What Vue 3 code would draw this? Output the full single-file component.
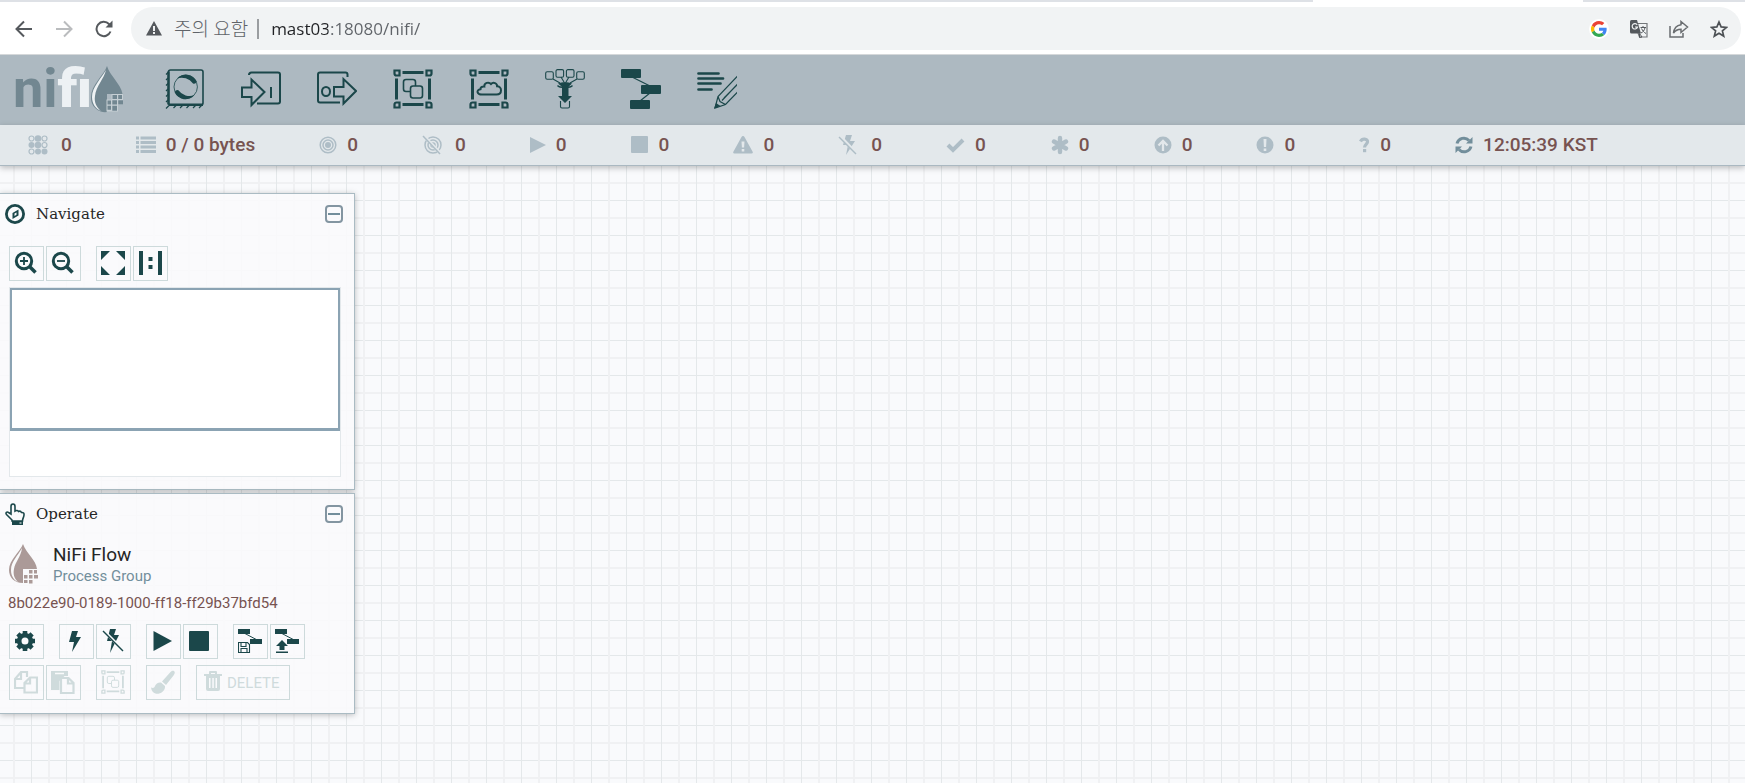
<script setup>
import { ref } from 'vue'

const address = ref('mast03:18080/nifi/')

const groupFrame = `
  <path d="M1.500 1.500h5v5h-3a2 2 0 0 1-2-2zM33.500 1.500h5v3a2 2 0 0 1-2 2h-3zM1.500 38.500v-3a2 2 0 0 1 2-2h3v5zM33.500 33.500h3a2 2 0 0 1 2 2v3h-5z" fill="none" stroke="currentColor" stroke-width="2.200"/>
  <path d="M9.500 3.500h21M9.500 35.500h21M3.500 9.500v21M36.500 9.500v21" fill="none" stroke="currentColor" stroke-width="3"/>`

const groupIcon = `${groupFrame}
  <g fill="none" stroke="currentColor" stroke-width="1.600">
    <path d="M18 22.500h-5a2.500 2.500 0 0 1-2.500-2.500v-7a2.500 2.500 0 0 1 2.500-2.500h7a2.500 2.500 0 0 1 2.500 2.500v4"/>
    <rect x="17.500" y="17" width="12" height="12" rx="2.500"/>
  </g>`

const tools = [
  {
    label: 'Processor',
    art: `
      <rect x="3.500" y="1" width="34.500" height="35" rx="2" fill="none" stroke="currentColor" stroke-width="1.600"/>
      <path d="M3.500 2.500v33M4 35.700h34" stroke="currentColor" stroke-width="2.400"/>
      <path d="M3 3.500L1 5.500M3 9L1 11M3 14.500L1 16.500M3 20L1 22M3 25.500L1 27.500M3 31L1 33M4 36.500L1 39.500M11 36.500L8.500 39M17.500 36.500L15 39M24 36.500L21.500 39M30.500 36.500L28 39M36.500 36.500L34 39" stroke="currentColor" stroke-width="1.200"/>
      <circle cx="20.700" cy="17.900" r="11.700" fill="none" stroke="currentColor" stroke-width=".8"/>
      <path d="M12 9.500A12 12 0 0 1 31.800 12.500Q30.500 15.500 28 14.500A14 14 0 0 0 12 9.500zM29.400 26.300A12 12 0 0 1 9.600 23.300Q10.900 20.300 13.400 21.300A14 14 0 0 0 29.400 26.300z" fill="currentColor"/>`
  },
  {
    label: 'Input Port',
    art: `<g fill="none" stroke="currentColor" stroke-width="2">
      <path d="M8 6q0-2.500 2.500-2.500H37q2 0 2 2V32.500q0 2-2 2H16"/>
      <path d="M1 18.500h9.500V10.500L23.500 23 10.500 36V28H1z"/>
      <path d="M30 18v11"/></g>`
  },
  {
    label: 'Output Port',
    art: `<g fill="none" stroke="currentColor" stroke-width="2">
      <path d="M30.500 8V5.500q0-2-2-2H3q-2 0-2 2V31.500q0 2 2 2H23"/>
      <path d="M17 18h9.500V10L39 22 26.500 34.500V27.500H17z"/>
      <ellipse cx="9" cy="22.500" rx="4" ry="4.600"/></g>`
  },
  { label: 'Process Group', art: groupIcon },
  {
    label: 'Remote Process Group',
    art: `${groupFrame}
      <path d="M13 25.500h14.500c3 0 4.500-2 4.500-4.200s-1.700-4-3.900-4c.2-3-3.800-4.700-6.100-2.300-2.200-2.500-7-1.200-6.700 2.500-2.500-.3-3.900 1-3.800 2.700-4.700.8-3.600 5.300 1.500 5.300z" fill="none" stroke="currentColor" stroke-width="2"/>`
  },
  {
    label: 'Funnel',
    art: `<g fill="none" stroke="currentColor" stroke-width="1.100">
      <rect x=".7" y="2.700" width="7.600" height="7.600" rx="1.500"/><rect x="11" y=".6" width="7.600" height="7.600" rx="1.500"/>
      <rect x="21.400" y=".6" width="7.600" height="7.600" rx="1.500"/><rect x="31.700" y="2.700" width="7.600" height="7.600" rx="1.500"/>
      <path d="M8 10l7 4M16 8l3 5M24 8l-3 5M32 10l-7 4"/>
      <path d="M12.500 16.500c2 2.600 13 2.600 15 0" stroke-width="1.300"/>
      <path d="M15.500 32v5.500q0 1.500 1.500 1.500h6q1.500 0 1.500-1.500V32"/></g>
      <path d="M13 14.500q7-3 14 0l-3.500 3.200v9.300h3.500L20 34l-7-7h4v-9.300z" fill="currentColor"/>`
  },
  {
    label: 'Template',
    art: `<path d="M11 8l18 9M29 24l-10 8" stroke="currentColor" stroke-width="1.200"/>
      <g fill="currentColor"><rect x="0" y="0" width="20" height="9" rx="1"/><rect x="20" y="16" width="20" height="9" rx="1"/><rect x="9" y="31" width="20" height="9" rx="1"/></g>`
  },
  {
    label: 'Label',
    art: `<path d="M1.500 4.500h20M1.500 9.500h24.500M1.500 14.500h22M1.500 20.500h13" stroke="currentColor" stroke-width="2.700" stroke-linecap="round"/>
      <g fill="none" stroke="currentColor" stroke-width="1.200"><path d="M40.500 7L21 27.500 18 39l10.500-3.500L40.500 23M40.500 15L25 31.500M21 27.500l2 5 5.500 3M27 29l13-13"/></g>
      <path d="M19 34l4.500 3L17 39.500z" fill="currentColor"/>`
  }
]

const bolt = 'M8 0h6l-2 6h5L8 20l2-10H5z'

const statuses = [
  { label: 'Active threads', value: '0', w: 20, wide: true, art: `<g fill="currentColor"><circle cx="10" cy="3.500" r="3.300"/><circle cx="3.500" cy="10" r="3"/><circle cx="10" cy="10" r="3.300"/><circle cx="10" cy="16.500" r="3"/><circle cx="16.500" cy="16.500" r="3"/></g><g fill="none" stroke="currentColor" stroke-width="1.200"><circle cx="3.500" cy="3.500" r="2.500"/><circle cx="16.500" cy="3.500" r="2.500"/><circle cx="16.500" cy="10" r="2.500"/><circle cx="3.500" cy="16.500" r="2.500"/></g>` },
  { label: 'Total queued data', value: '0 / 0 bytes', w: 20, art: `<path d="M0 3h3M0 7.500h3M0 12h3M0 16.500h3M4.500 3H20M4.500 7.500H20M4.500 12H20M4.500 16.500H20" stroke="currentColor" stroke-width="3"/>` },
  { label: 'Transmitting', value: '0', w: 18, art: `<g fill="none" stroke="currentColor" stroke-width="1.500"><circle cx="9" cy="10" r="7.800"/><circle cx="9" cy="10" r="5"/></g><circle cx="9" cy="10" r="3" fill="currentColor"/>` },
  { label: 'Not transmitting', value: '0', w: 20, wide: true, art: `<g fill="none" stroke="currentColor" stroke-width="1.500"><circle cx="11" cy="10" r="8"/><circle cx="11" cy="10" r="5"/><circle cx="11" cy="10" r="2"/></g><path d="M2 1l17 18" stroke="#e3e8eb" stroke-width="3"/><path d="M1 1l17 18" stroke="currentColor" stroke-width="1.500"/>` },
  { label: 'Running', value: '0', w: 16, art: `<path d="M0 2l16 8-16 8z" fill="currentColor"/>` },
  { label: 'Stopped', value: '0', w: 18, art: `<rect x="0" y="1" width="17" height="17" rx="1" fill="currentColor"/>` },
  { label: 'Invalid', value: '0', w: 20, art: `<path fill-rule="evenodd" d="M10 1q1 0 1.500 1l8 14.500q1 2-1 2h-17q-2 0-1-2L8.500 2Q9 1 10 1zM8.500 6.500l.4 6h2.200l.4-6zM8.700 14h2.600v2.500H8.700z" fill="currentColor"/>` },
  { label: 'Disabled', value: '0', w: 20, wide: true, art: `<path d="${bolt}" fill="currentColor"/><path d="M2 1l17 18" stroke="#e3e8eb" stroke-width="3"/><path d="M1 2l17 17" stroke="currentColor" stroke-width="1.400"/>` },
  { label: 'Up to date', value: '0', w: 19, art: `<path d="M2 10l5 5L17 5" fill="none" stroke="currentColor" stroke-width="4"/>` },
  { label: 'Locally modified', value: '0', w: 19, art: `<path d="M10 3v14M4 6.500l12 7M16 6.500l-12 7" stroke="currentColor" stroke-width="4.400" stroke-linecap="round"/>` },
  { label: 'Stale', value: '0', w: 18, art: `<circle cx="9" cy="10" r="8.500" fill="currentColor"/><path d="M9 16V6M4.500 10.500L9 6l4.500 4.500" fill="none" stroke="#e3e8eb" stroke-width="2.300"/>` },
  { label: 'Locally modified and stale', value: '0', w: 18, art: `<circle cx="9" cy="10" r="8.500" fill="currentColor"/><path d="M7.500 4h3l-.4 8H7.900zM7.700 13.500h2.600V16H7.700z" fill="#e3e8eb"/>` },
  { label: 'Sync failure', value: '0', w: 11, art: `<path d="M1.500 6.500C3 3 9 3.500 8.500 7c-.3 2.300-3 2.500-3 5.500" fill="none" stroke="currentColor" stroke-width="3.200"/><path d="M4 14h3.200v3.200H4z" fill="currentColor"/>` },
  { label: 'Last refresh', value: '12:05:39 KST', w: 18, dark: true, art: `<path d="M2 8.500A7 7 0 0 1 14 5.500M16 11.500A7 7 0 0 1 4 14.500" fill="none" stroke="currentColor" stroke-width="3"/><path d="M17.500 2v6.500H11zM.5 18v-6.500H7z" fill="currentColor"/>` }
]

const flowMark = `<path d="M6 4l17 9" stroke="currentColor"/><g fill="currentColor"><rect x="0" y="0" width="12" height="5"/><rect x="12" y="10" width="12" height="5"/></g>`

const zoomGroups = [
  [
    { label: 'Zoom In', art: `<circle cx="10" cy="10" r="7.700" fill="none" stroke="currentColor" stroke-width="3"/><path d="M15.500 15.500l6 6" stroke="currentColor" stroke-width="3.600"/><path d="M6 10h8M10 6v8" stroke="currentColor" stroke-width="1.800"/>` },
    { label: 'Zoom Out', art: `<circle cx="10" cy="10" r="7.700" fill="none" stroke="currentColor" stroke-width="3"/><path d="M15.500 15.500l6 6" stroke="currentColor" stroke-width="3.600"/><path d="M6 10h8" stroke="currentColor" stroke-width="1.800"/>` }
  ],
  [
    { label: 'Fit', art: `<path d="M0 0h9L0 9zM24 0v9l-9-9zM0 24v-9l9 9zM24 24h-9l9-9z" fill="currentColor"/>` },
    { label: 'Actual', art: `<path d="M1 0h4v24H1zM20 0h4v24h-4zM10.500 6h4v4h-4zM10.500 14h4v4h-4z" fill="currentColor"/>` }
  ]
]

const operateGroups = [
  [{ label: 'Configuration', art: `<g fill="none" stroke="currentColor"><circle cx="11" cy="12" r="5.800" stroke-width="4.600"/><path d="M11 2v4M11 18v4M1 12h4M17 12h4M3.900 4.900l3 3M15.100 16.100l3 3M18.100 4.900l-3 3M6.900 16.100l-3 3" stroke-width="4.600"/></g>` }],
  [
    { label: 'Enable', art: `<path d="M8 2h6l-2 6h5L8 23l2-10H5z" fill="currentColor"/>` },
    { label: 'Disable', art: `<path d="M9 0h6l-2 6h5L9 24l2-12H6z" fill="currentColor"/><path d="M3 2l20 20" stroke="#f9fafb" stroke-width="3"/><path d="M2 2l20 20" stroke="currentColor" stroke-width="1.400"/>` }
  ],
  [
    { label: 'Start', art: `<path d="M2.500 2l18.500 10-18.500 10z" fill="currentColor"/>` },
    { label: 'Stop', art: `<rect x="1" y="2" width="20" height="20" rx="1" fill="currentColor"/>` }
  ],
  [
    { label: 'Create Template', art: `${flowMark}<path d="M.5 13.500h9l2 2v8H.5zM3 13.500v4h5v-4M3 23.500v-4h6v4" fill="none" stroke="currentColor" stroke-width="1.100"/>` },
    { label: 'Upload Template', art: `${flowMark}<path d="M7 11l6 6H9.500v4h-5v-4H1zM1 22.500h12V24H1z" fill="currentColor"/>` }
  ]
]

const disabledGroups = [
  [
    { label: 'Copy', art: `<g fill="none" stroke="currentColor" stroke-width="2.200"><path d="M10 18H1V9l6-7h6v5M1 9h6V2"/><path d="M10.500 22.500V13l5.500-5.500h7v15zM10.500 13.500H16v-6"/></g>` },
    { label: 'Paste', art: `<path d="M0 1h17v5h-3.500L8.500 11v9H0z" fill="currentColor"/><path d="M4 3.500h9" stroke="#f9fafb" stroke-width="1.500"/><path d="M10 8h7.500l5 5v10H10zM17 8v5.500h5.500" fill="none" stroke="currentColor" stroke-width="2.200"/>` }
  ],
  [{ label: 'Group', art: `<g transform="scale(.6)">${groupIcon}</g>` }],
  [{ label: 'Color', art: `<path d="M23 1c1.500 1 .5 3-.5 4.500L15 15l-4-3.500 8.500-9.500c1.300-1.200 2.600-1.800 3.500-1zM10 12.500l4 3.500c.5 5-5 8.500-9.500 7.500C2 23 .5 20.500 0 17.500c2 1 3.500.5 4-1.500.7-2.200 3.500-4 6-3.500z" fill="currentColor"/>` }]
]
</script>

<template>
  <div class="page">
    <header class="browser">
      <div class="tabs"><span class="tab"></span></div>
      <div class="browser-row">
        <button class="nav-btn" aria-label="Back"><svg width="18" height="18" viewBox="0 0 18 18"><path d="M17 9H2M9 1.500L1.500 9 9 16.500" fill="none" stroke="#55595d" stroke-width="2"/></svg></button>
        <button class="nav-btn" aria-label="Forward"><svg width="18" height="18" viewBox="0 0 18 18"><path d="M1 9h15M9 1.500L16.500 9 9 16.500" fill="none" stroke="#babcbe" stroke-width="2"/></svg></button>
        <button class="nav-btn" aria-label="Reload"><svg width="18" height="18" viewBox="0 0 18 18"><path d="M15.500 11.500A7.200 7.200 0 1 1 14 4l1.500 1.500" fill="none" stroke="#55595d" stroke-width="2"/><path d="M17.500.5V7.500h-7z" fill="#55595d"/></svg></button>
        <div class="omnibox">
          <svg width="16" height="15" viewBox="0 0 16 15"><path fill-rule="evenodd" d="M8 0l8 14.500H0zM7 5v5h2V5zM7 11v2h2v-2z" fill="#55595d"/></svg>
          <span class="warn">주의 요함</span>
          <span class="divider"></span>
          <input v-model="address" class="url" aria-label="Address" />
          <button aria-label="Google search" class="google"><svg width="16" height="16" viewBox="0 0 48 48"><path fill="#ea4335" d="M24 9.500c3.500 0 6.700 1.200 9.200 3.600l6.900-6.900C35.900 2.400 30.500 0 24 0 14.600 0 6.500 5.400 2.600 13.200l8 6.200C12.400 13.700 17.700 9.500 24 9.500z"/><path fill="#4285f4" d="M47 24.600c0-1.600-.2-3.100-.4-4.600H24v9h12.900c-.6 3-2.300 5.500-4.700 7.200l7.700 6C44.400 38 47 31.800 47 24.600z"/><path fill="#fbbc05" d="M10.500 28.600a14.500 14.500 0 0 1 0-9.200l-8-6.200a24 24 0 0 0 0 21.600z"/><path fill="#34a853" d="M24 48c6.500 0 11.900-2.100 15.900-5.800l-7.700-6c-2.200 1.500-4.900 2.300-8.200 2.300-6.300 0-11.600-4.200-13.500-9.900l-8 6.200C6.500 42.600 14.600 48 24 48z"/></svg></button>
          <button aria-label="Translate"><svg width="18" height="18" viewBox="0 0 18 18"><path d="M8 3.500h9v13.500H9.500L8 13" fill="#f1f3f4" stroke="#74777a" stroke-width="1.200"/><path d="M1.500 0H7l4 13.500H1.500Q0 13.500 0 12V1.500Q0 0 1.500 0z" fill="#55595d"/><path d="M7.200 4.900A2.700 2.700 0 1 0 7.500 7H5" fill="none" stroke="#f1f3f4" stroke-width="1.200"/><path d="M9.500 13.500L12 17l-2.500.5zM10.500 7.500h5.500M13 6v1.500M15 7.500c-.5 3-2 4.500-4 5.500M11.500 8.500c1 2 2.500 4 4.500 5" fill="none" stroke="#55595d"/></svg></button>
          <button aria-label="Share"><svg width="20" height="18" viewBox="0 0 20 18"><path d="M1 6v11h13v-4" fill="none" stroke="#6a6d70" stroke-width="1.500"/><path d="M12 1.500L18.500 7 12 12.500V9.200c-3.500 0-5.800 1.200-7.500 4C5 8.500 7.500 5.300 12 4.700z" fill="none" stroke="#6a6d70" stroke-width="1.500"/></svg></button>
          <button aria-label="Bookmark"><svg width="18" height="18" viewBox="0 0 18 18"><path d="M9 2l2.100 4.900 5.400.5-4.100 3.500 1.300 5.200L9 13.300l-4.700 2.800 1.300-5.200-4.100-3.500 5.400-.5z" fill="none" stroke="#4d5155" stroke-width="1.700"/></svg></button>
        </div>
      </div>
    </header>

    <div class="toolbar">
      <div class="logo">
        <span class="word">ni<b>fi</b></span>
        <svg width="34" height="47" viewBox="0 0 34 47">
          <path d="M16 0C13 9 0 19 0 31a14 14 0 0 0 16 15V28h15.500C30 18 19 10 16 0z" fill="#728791"/>
          <path d="M15 4C10 13 1 21 1 31c0 7 4 12 9 14C5 41 3 36 4 30 5 20 13 13 15 4z" fill="#eef2f4"/>
          <path d="M20.500 28H32v11h-5v6.500H15.500V33.500h5z" fill="#c6cfd4"/>
          <path d="M21.500 29H26v4h-4.500zM27.200 29H31v4h-3.800zM16.500 34.500H20v4h-3.500zM21.300 34.300h4.700v4.200h-4.700zM27.200 34.300H32v4.200h-4.800zM16.500 39.800H20v4h-3.500zM21.300 39.800h4.700v5h-4.700z" fill="#728791"/>
        </svg>
      </div>
      <div class="tools">
        <button v-for="tool in tools" :key="tool.label" :aria-label="tool.label">
          <svg width="40" height="40" viewBox="0 0 40 40" v-html="tool.art"></svg>
        </button>
      </div>
    </div>

    <div class="status">
      <div v-for="s in statuses" :key="s.label" class="stat" :class="{ wide: s.wide, dark: s.dark }" :title="s.label">
        <svg :width="s.w" height="20" :viewBox="`0 0 ${s.w} 20`" v-html="s.art"></svg>
        <span>{{ s.value }}</span>
      </div>
    </div>

    <main class="panels">
      <section class="panel navigate">
        <div class="head">
          <svg width="20" height="22" viewBox="0 0 20 22"><circle cx="10" cy="11" r="8.600" fill="none" stroke="currentColor" stroke-width="2.800"/><path d="M13.500 6.500v6l-6 3.500v-6zM9.500 10.500v2.500l2-1.200V9.500z" fill-rule="evenodd" fill="currentColor"/></svg>
          <h2>Navigate</h2>
          <button class="fold" aria-label="Collapse Navigate"></button>
        </div>
        <div class="buttons">
          <div v-for="(g, i) in zoomGroups" :key="i" class="group">
            <button v-for="b in g" :key="b.label" class="btn" :aria-label="b.label"><svg width="24" height="24" viewBox="0 0 24 24" v-html="b.art"></svg></button>
          </div>
        </div>
        <div class="birdseye"><div class="brush"></div></div>
      </section>

      <section class="panel operate">
        <div class="head">
          <svg width="20" height="22" viewBox="0 0 20 22"><path d="M7 17L1.500 11.500C0 9.500 2 8.500 3.500 9.500L6 11V3.500C6 .2 10 .2 10 3.500V8c1.500-1 3-.5 3.500.5 1.500-.7 2.500 0 3 1 2-.2 2.700.8 2.500 2.500-.2 2.500-1.500 3.500-1.500 6H7z" fill="#f9fafb" stroke="currentColor" stroke-width="1.600"/><path d="M7 18h11v4H7z" fill="currentColor"/><path d="M14.500 19.500h2v1h-2z" fill="#fff"/></svg>
          <h2>Operate</h2>
          <button class="fold" aria-label="Collapse Operate"></button>
        </div>
        <div class="context">
          <svg width="30" height="40" viewBox="0 0 30 40">
            <path d="M14 0C11 8 0 16 0 26c0 7 5 13 14 13V25h14C27 16 17 9 14 0z" fill="#ab9a98"/>
            <path d="M13 4C9 12 2 17 2 26c0 6 3 10 7 12C5 34 4 30 5 25 6 18 12 13 13 4z" fill="#f9fafb"/>
            <path d="M19 25h10v10h-5v5H14V30h5z" fill="#f9fafb"/>
            <path d="M20 26h3.500v3.500H20zM25 26h3v3.500h-3zM15 31h3.500v3.500H15zM20 31h3.500v3.500H20zM25 31h4v3.500h-4zM15 36h3.500v3H15zM20 36h3.500v3.500H20z" fill="#ab9a98"/>
          </svg>
          <div>
            <div class="name">NiFi Flow</div>
            <div class="type">Process Group</div>
          </div>
        </div>
        <div class="uuid">8b022e90-0189-1000-ff18-ff29b37bfd54</div>
        <div class="buttons">
          <div v-for="(g, i) in operateGroups" :key="i" class="group">
            <button v-for="b in g" :key="b.label" class="btn" :aria-label="b.label"><svg width="24" height="24" viewBox="0 0 24 24" v-html="b.art"></svg></button>
          </div>
        </div>
        <div class="buttons">
          <div v-for="(g, i) in disabledGroups" :key="i" class="group">
            <button v-for="b in g" :key="b.label" class="btn" disabled :aria-label="b.label"><svg width="24" height="24" viewBox="0 0 24 24" v-html="b.art"></svg></button>
          </div>
          <button class="btn delete" disabled>
            <svg width="18" height="20" viewBox="0 0 18 20"><path d="M0 3h18v2H0zM5 3V1q0-1 1-1h6q1 0 1 1v2h-2V2H7v1z" fill="currentColor"/><path fill-rule="evenodd" d="M2 5h14v13q0 2-2 2H4q-2 0-2-2zM5 7v10h1.500V7zM8.300 7v10h1.500V7zM11.500 7v10H13V7z" fill="currentColor"/></svg>
            DELETE
          </button>
        </div>
      </section>
    </main>
  </div>
</template>

<style>
body {
  margin: 0;
}
</style>

<style scoped>
.page {
  min-height: 100vh;
  font-family: Roboto, "Liberation Sans", sans-serif;
  color: #1b474a;
  background-color: #f9fafc;
  background-image:
    linear-gradient(to right, transparent 13px, #f0f1f3 13px, #f0f1f3 15px, transparent 15px, transparent 31px, #e4e8ea 31px, #e4e8ea 32px, transparent 32px),
    linear-gradient(to bottom, transparent 7px, #f0f1f3 7px, #f0f1f3 9px, transparent 9px, transparent 25px, #e4e8ea 25px, #e4e8ea 26px, transparent 26px);
  background-size: 35px 35px;
}
button {
  padding: 0;
  border: 0;
  background: none;
  color: inherit;
  font: inherit;
}
svg {
  display: block;
  flex: none;
}
.browser {
  height: 54px;
  background: #fff;
  border-bottom: 1px solid #d5d8da;
}
.tabs {
  display: flex;
  height: 2px;
  padding-right: 162px;
  justify-content: flex-end;
  background: #dee1e6;
}
.tab {
  width: 270px;
  background: #fff;
}
.browser-row {
  display: flex;
  align-items: center;
  gap: 22px;
  padding: 5px 4px 4px 15px;
}
.nav-btn {
  width: 18px;
}
.omnibox {
  display: flex;
  flex: 1;
  align-items: center;
  height: 43px;
  margin-left: -4px;
  padding: 0 13px 0 15px;
  border-radius: 22px;
  background: #f1f3f4;
}
.warn {
  margin-left: 12px;
  padding-bottom: 2px;
  font: 300 19px/24px "Noto Sans CJK KR", sans-serif;
  color: #5f6368;
}
.divider {
  width: 2px;
  height: 20px;
  margin: 0 12px 0 9px;
  background: #9a9da0;
}
.url {
  flex: 1;
  padding: 0;
  border: 0;
  outline: 0;
  font: 17px/24px "Open Sans", "Noto Sans", sans-serif;
  color: transparent;
  background: linear-gradient(to right, #202124 57px, #5f6368 57px);
  background-clip: text;
}
.omnibox button + button {
  margin-left: 21px;
}
.omnibox .google {
  padding: 2px;
  border-radius: 50%;
  background: #fff;
}
.toolbar {
  display: flex;
  height: 70px;
  box-sizing: border-box;
  align-items: center;
  padding-bottom: 2px;
  background: #adb9c1;
}
.logo {
  display: flex;
  width: 152px;
  padding-left: 13px;
  align-items: center;
}
.word {
  width: 78px;
  font: bold 54px/60px Roboto, "Liberation Sans", sans-serif;
  color: #728791;
}
.word b {
  color: #edf1f4;
}
.tools {
  display: flex;
  gap: 36px;
}
.status {
  display: flex;
  height: 40px;
  align-items: center;
  gap: 64px;
  padding-left: 28px;
  background: #e3e8eb;
  border-bottom: 1px solid #aab8c1;
  box-shadow: 0 2px 6px rgba(0, 0, 0, 0.25);
  color: #aebdc6;
  white-space: nowrap;
}
.stat {
  display: flex;
  align-items: center;
  gap: 10px;
}
.stat.wide {
  gap: 13px;
}
.stat.dark {
  color: #728e9b;
}
.stat span {
  font-size: 19px;
  font-weight: 500;
  line-height: 24px;
  color: #775351;
}
.panels {
  display: flex;
  width: 355px;
  flex-direction: column;
  gap: 3px;
  padding-top: 27px;
}
.panel {
  box-sizing: border-box;
  border: 1px solid #aabbc3;
  border-left: 0;
  background: rgba(249, 250, 252, 0.9);
  box-shadow: 0 1px 6px rgba(0, 0, 0, 0.25);
}
.navigate {
  padding-bottom: 12px;
}
.operate {
  padding-bottom: 13px;
}
.head {
  display: flex;
  height: 40px;
  align-items: center;
  padding: 0 11px 0 5px;
}
.head h2 {
  flex: 1;
  margin: 0 0 0 11px;
  font: 15px/20px "DejaVu Serif", serif;
  color: #262626;
}
.fold {
  display: flex;
  width: 18px;
  height: 18px;
  align-items: center;
  justify-content: center;
  border: 2px solid #8395a1;
  border-radius: 4px;
}
.fold::before {
  content: "";
  width: 12px;
  height: 2px;
  flex: none;
  background: #728e9b;
}
.buttons {
  display: flex;
  gap: 15px;
  padding-left: 9px;
}
.navigate .buttons {
  margin: 12px 0 6px;
}
.group {
  display: flex;
  gap: 2px;
}
.btn {
  display: flex;
  width: 35px;
  height: 35px;
  box-sizing: border-box;
  align-items: center;
  padding: 0 0 2px 4px;
  border: 1px solid #cddadb;
}
.btn:disabled {
  color: #cfdbdc;
}
.birdseye {
  height: 188px;
  margin: 0 13px 0 9px;
  border: 1px solid #e3e8eb;
  background: #fff;
}
.brush {
  height: 138px;
  border: 2px solid #8ba3b3;
  border-bottom-width: 3px;
}
.context {
  display: flex;
  gap: 14px;
  margin-top: 10px;
  padding-left: 9px;
}
.name {
  font-size: 19px;
  line-height: 22px;
  color: #262626;
}
.type {
  font-size: 15px;
  line-height: 20px;
  color: #728e9b;
}
.uuid {
  margin: 8px 0 12px;
  padding-left: 8px;
  font-size: 15px;
  line-height: 18px;
  color: #775351;
}
.operate .buttons + .buttons {
  margin-top: 6px;
}
.delete {
  width: 94px;
  gap: 5px;
  padding: 0 0 0 7px;
  font-size: 15px;
}
.delete svg {
  margin-bottom: 3px;
}
</style>
